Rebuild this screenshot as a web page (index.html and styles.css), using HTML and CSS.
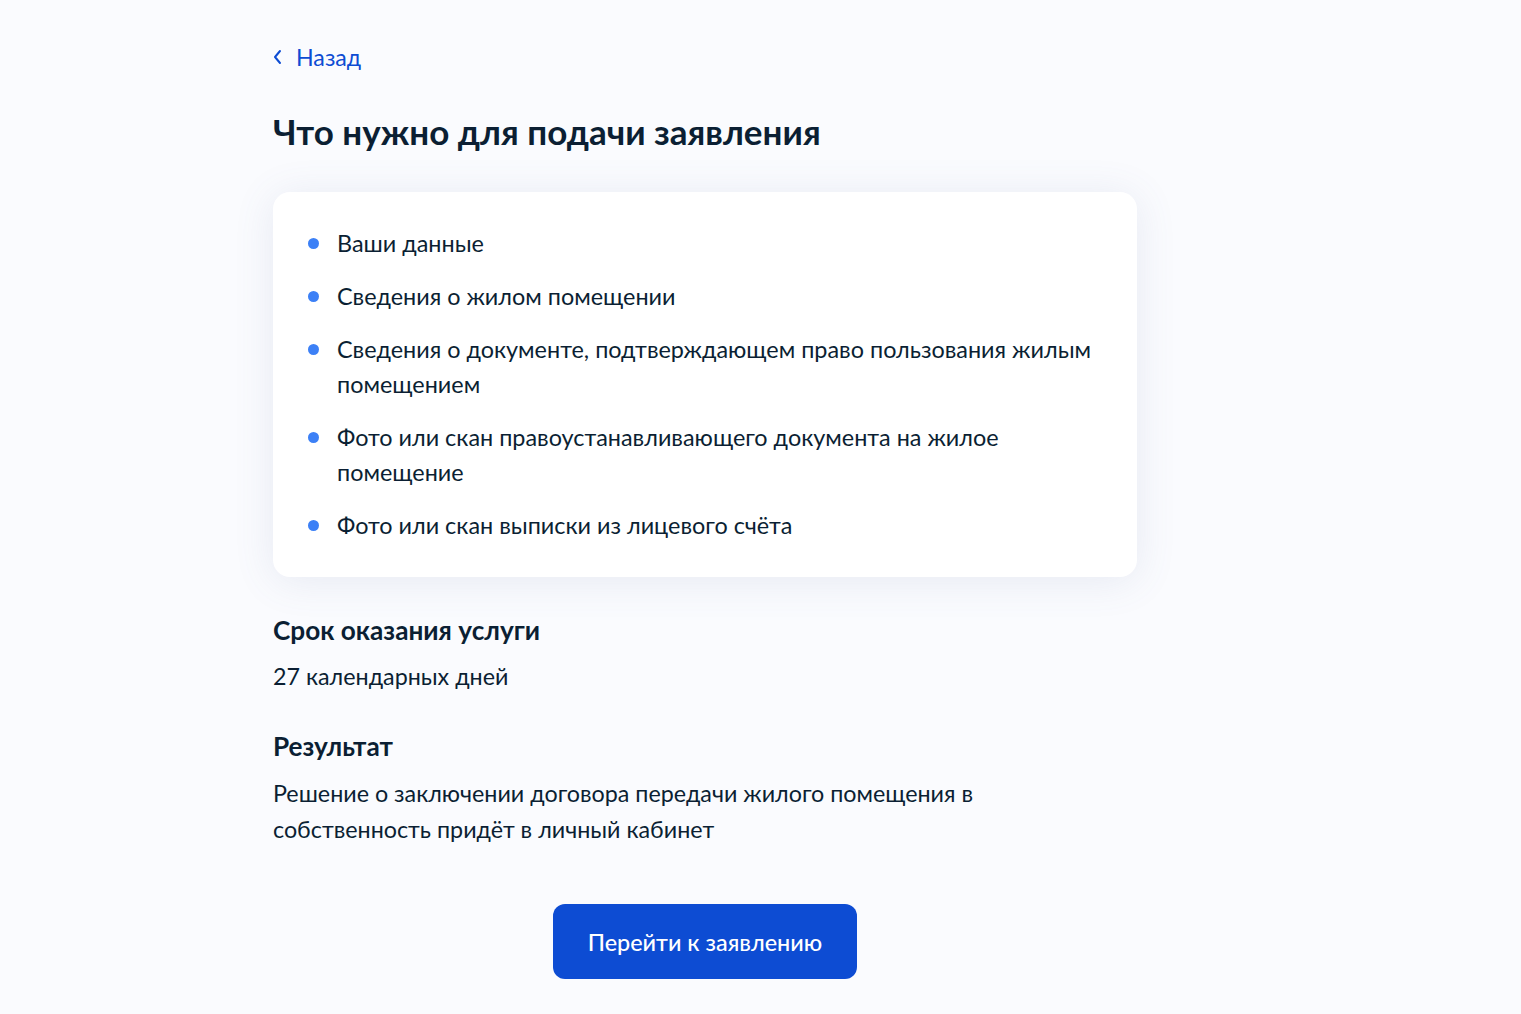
FILE: index.html
```html
<!DOCTYPE html>
<html lang="ru">
<head>
    <meta charset="UTF-8">
    <meta name="viewport" content="width=device-width, initial-scale=1.0">
    <title>Что нужно для подачи заявления</title>
    <link rel="stylesheet" href="styles.css">
</head>
<body>
    <div class="page">
        <a class="back" href="#">
            <svg class="back-icon" width="12" height="16" viewBox="0 0 12 16">
                <path d="M8 2 L3 8 L8 14" fill="none" stroke="#0d4cd3" stroke-width="2" stroke-linecap="round" stroke-linejoin="round"/>
            </svg>
            <span>Назад</span>
        </a>

        <h1 class="title">Что нужно для подачи заявления</h1>

        <div class="card">
            <ul class="docs">
                <li>Ваши данные</li>
                <li>Сведения о жилом помещении</li>
                <li>Сведения о документе, подтверждающем право пользования жилым помещением</li>
                <li>Фото или скан правоустанавливающего документа на жилое помещение</li>
                <li>Фото или скан выписки из лицевого счёта</li>
            </ul>
        </div>

        <h3 class="subtitle">Срок оказания услуги</h3>
        <p class="text">27 календарных дней</p>

        <h3 class="subtitle">Результат</h3>
        <p class="text result">Решение о заключении договора передачи жилого помещения в собственность придёт в личный кабинет</p>

        <div class="actions">
            <button class="main-button">Перейти к заявлению</button>
        </div>
    </div>
</body>
</html>
```

FILE: styles.css
```css
body {
    margin: 0;
    background: #fafbfe;
    font-family: Lato, "Noto Sans", sans-serif;
    color: #0b1f33;
}
.page {
    width: 864px;
    margin-left: 273px;
    padding-top: 42px;
}
.back {
    display: flex;
    align-items: center;
    gap: 12px;
    color: #0d4cd3;
    text-decoration: none;
    font-size: 23.2px;
    line-height: 30px;
}
.back-icon {
    margin-left: -1px;
}
.title {
    margin: 36px 0 0;
    font-size: 35px;
    line-height: 46px;
    font-weight: 700;
}
.card {
    margin-top: 38px;
    background: #fff;
    border-radius: 17px;
    padding: 34px 35px;
    box-shadow: 0 4px 40px rgba(88, 110, 160, 0.12);
}
.docs {
    list-style: none;
    margin: 0;
    padding: 0;
}
.docs li {
    position: relative;
    padding-left: 29px;
    font-size: 23.4px;
    line-height: 35px;
    margin-bottom: 18px;
}
.docs li:last-child {
    margin-bottom: 0;
}
.docs li::before {
    content: "";
    position: absolute;
    left: 0;
    top: 12px;
    width: 11px;
    height: 11px;
    border-radius: 50%;
    background: #3c80f6;
}
.subtitle {
    margin: 36px 0 0;
    font-size: 26.2px;
    line-height: 35px;
    font-weight: 700;
}
.text {
    margin: 11px 0 0;
    font-size: 23.3px;
    line-height: 35px;
}
.result {
    width: 730px;
    line-height: 36px;
}
.text + .subtitle {
    margin-top: 35px;
}
.actions {
    display: flex;
    justify-content: center;
    margin-top: 57px;
}
.main-button {
    background-color: #0d4cd3;
    color: white;
    border: none;
    width: 304px;
    height: 75px;
    border-radius: 12px;
    font-family: Lato, "Noto Sans", sans-serif;
    font-size: 23.4px;
    font-weight: 500;
    cursor: pointer;
}
```
